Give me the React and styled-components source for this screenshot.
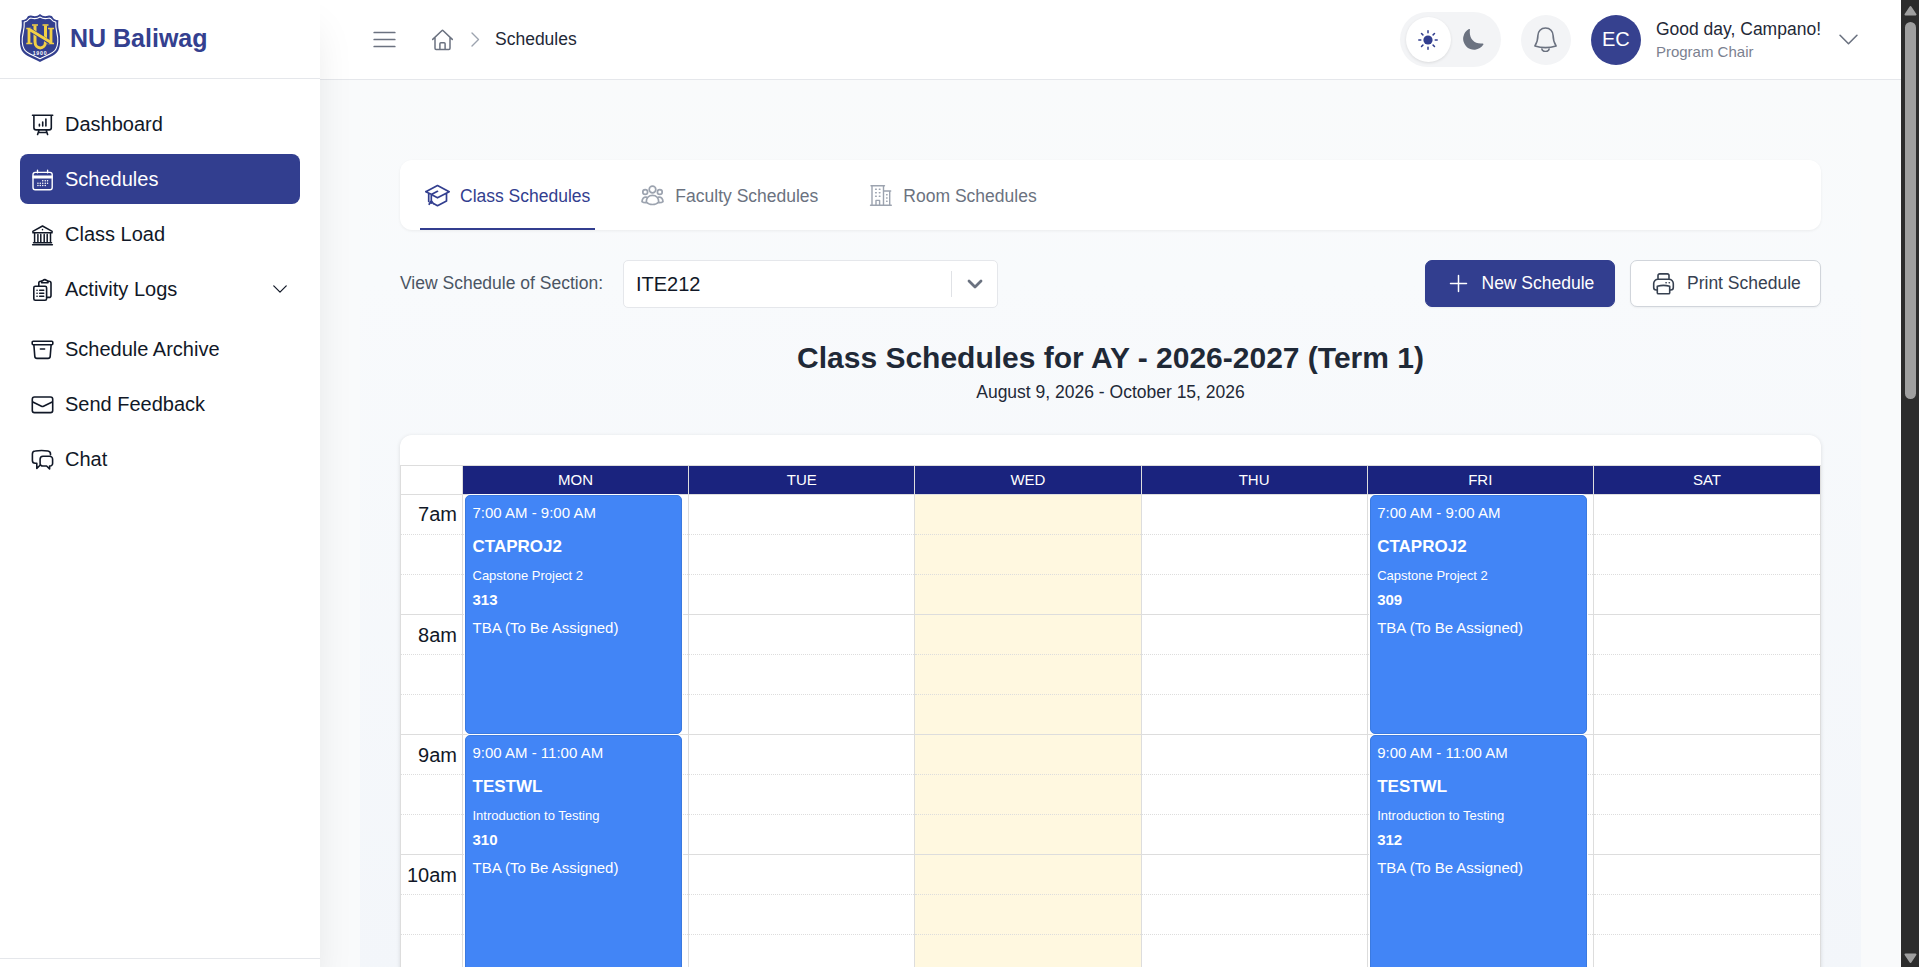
import React from "react";
import styled, { createGlobalStyle } from "styled-components";

const GlobalStyle = createGlobalStyle`
  *, *::before, *::after { box-sizing: border-box; }
  html, body, #root { height: 100%; margin: 0; }
  body {
    overflow: hidden;
    background: #f9fafb;
    color: #111827;
    font-family: "Liberation Sans", Arial, sans-serif;
  }
  button { font: inherit; border: 0; background: none; padding: 0; margin: 0; color: inherit; text-align: left; }
  h1, p { margin: 0; }
`;

/* ---------- icons ---------- */

const Svg = styled.svg`
  display: block;
  flex: none;
  width: ${(p) => p.$width || p.$size || 25}px;
  height: ${(p) => p.$size || 25}px;
  fill: none;
  stroke: currentColor;
  stroke-width: ${(p) => p.$stroke || 1.6};
  stroke-linecap: round;
  stroke-linejoin: round;
  color: ${(p) => p.$color || "inherit"};
`;

const Icon = ({ children, ...rest }) => (
  <Svg viewBox="0 0 25 25" {...rest}>{children}</Svg>
);

const DashboardIcon = () => (
  <Icon>
    <path d="M2.5 3.2h20.2M3.9 3.5v12.2a2.2 2.2 0 0 0 2.2 2.2h13a2.2 2.2 0 0 0 2.2-2.2V3.5M9 18.2 7.6 22.4M16.2 18.2l1.4 4.2M8.3 20.5h8.6M9.4 12.2v1.8M12.7 10v4M15.9 7v7" />
  </Icon>
);
const ScheduleIcon = () => (
  <Icon $stroke={1.4}>
    <rect x="3" y="5.4" width="19.2" height="17.3" rx="2.2" />
    <path d="M3 9.2h19.2M3 10.7h19.2M7.5 3.2v2.6M17.6 3.2v2.6" />
    <path d="M7.9 16.2h.1M7.9 18.5h.1M10.2 16.2h.1M10.2 18.5h.1M12.7 13.8h.1M12.7 16.2h.1M12.7 18.5h.1M15.2 13.8h.1M15.2 16.2h.1M17.5 13.8h.1M15.2 18.5h.1M17.5 16.2h.1" />
  </Icon>
);
const LibraryIcon = () => (
  <Icon $stroke={1.5}>
    <path d="M2.8 9.3 12.5 4l9.7 5.3M2.8 10.8h19.4M12.5 7.6v.2M4.6 11.5v9M7.9 12.5v8M10.8 12.5v8M14.2 12.5v8M17.2 12.5v8M20.5 11.5v9M3.5 20.7h18M2.6 22.8h19.8" />
  </Icon>
);
const LogsIcon = () => (
  <Icon $stroke={1.6}>
    <path d="M8.8 9V6a1.8 1.8 0 0 1 1.8-1.8h1M18 4.2h1a2 2 0 0 1 2 2v12.2a2 2 0 0 1-2 2h-2" />
    <path d="M11.6 4.8c0-1.1.8-1.3 1.5-1.4.8-1 2.6-1 3.4 0 .7.1 1.5.3 1.5 1.4v.9h-6.4z" />
    <rect x="3.8" y="9.3" width="12.8" height="14" rx="1.5" />
    <path d="M7 13.2h.1M9.7 13.2h4M7 16.2h.1M9.7 16.2h4M7 19.2h.1M9.7 19.2h4" />
  </Icon>
);
const ArchiveIcon = () => (
  <Icon>
    <path d="M3.2 4.2h18.6a1 1 0 0 1 1 1v1.6a1 1 0 0 1-1 1H3.2a1 1 0 0 1-1-1V5.2a1 1 0 0 1 1-1zM3.9 8.2l.9 11.2a2.2 2.2 0 0 0 2.2 2h11a2.2 2.2 0 0 0 2.2-2l.9-11.2M10.4 12h4.2" />
  </Icon>
);
const MailIcon = () => (
  <Icon>
    <rect x="2.3" y="5" width="20.4" height="15.6" rx="2.2" />
    <path d="m2.8 10 8.7 4.3a2.3 2.3 0 0 0 2 0L22.2 10" />
  </Icon>
);
const ChatIcon = () => (
  <Icon>
    <path d="M20.5 7.8V7a3 3 0 0 0-2.6-3 45 45 0 0 0-12.6 0 3 3 0 0 0-2.9 3v6.5a2.8 2.8 0 0 0 2.8 2.8h1.6v5.2l3.2-3.3" />
    <path d="M13 9.2h6.5a3 3 0 0 1 3.1 3v4.2a2.6 2.6 0 0 1-2.6 2.6h-.4v3l-3-3H13a2.6 2.6 0 0 1-2.9-2.6v-4.2a3 3 0 0 1 2.9-3z" />
  </Icon>
);
const ChevronDown = ({ size = 18, stroke = 1.5, color }) => (
  <Svg viewBox="0 0 18 18" $size={size} $stroke={stroke} $color={color}><path d="m1 5 8 8 8-8" /></Svg>
);
const HomeIcon = () => (
  <Icon $stroke={1.5}>
    <path d="m2.7 12.4 9.1-8.7a1 1 0 0 1 1.4 0l9.1 8.7M5 10.7v10.6c0 .7.4 1.1 1.1 1.1h12.8c.7 0 1.1-.4 1.1-1.1V10.7M9.9 22.2v-5.4c0-.6.4-1 1-1h3.2c.6 0 1 .4 1 1v5.4" />
  </Icon>
);
const CapIcon = () => (
  <Icon $stroke={1.7}>
    <path d="M.8 8.7 12.5 2.5l11.7 6.2-11.7 6.1-4.3-2.2M.8 8.7l6.5 3M12.5 8.3 6.3 11.6v8.5M3.7 10.3v8.2M8.5 20.6l4 2.1 9-4.7v-7.4M6.3 17.8 4.2 21.3M6.3 17.8l2.2 3" />
  </Icon>
);
const PeopleIcon = () => (
  <Icon $stroke={1.7}>
    <circle cx="12.5" cy="6.5" r="3.3" />
    <circle cx="5.2" cy="9" r="2.4" />
    <circle cx="19.8" cy="9" r="2.4" />
    <path d="M12.5 12.4c3.6 0 6.2 2.6 6.2 6.6-1.6 1.9-3.6 2.5-6.2 2.5s-4.6-.6-6.2-2.5c0-4 2.6-6.6 6.2-6.6zM6.4 14.2C3.7 13.9 2.2 15.5 2 18.6c1 .9 2.3 1.2 4.2 1.1M18.6 14.2c2.7-.3 4.2 1.3 4.4 4.4-1 .9-2.3 1.2-4.2 1.1" />
  </Icon>
);
const BuildingIcon = () => (
  <Icon $stroke={1.4}>
    <path d="M2.5 22.3h20.8M4 22V2.7h11.5V22M3 2.7h13.5M15.8 8h5.9v14M15.8 8h6.9M8 22v-4.6h3.6V22" />
    <path d="M7.6 6.2h.7M11.3 6.2h.7M7.6 9.7h.7M11.3 9.7h.7M7.6 13.2h.7M11.3 13.2h.7M18.6 11.7h.5M18.6 15h.5M18.6 18.3h.5" />
  </Icon>
);
const PrinterIcon = () => (
  <Icon $stroke={1.6}>
    <path d="M7 7.8V4.6a1.7 1.7 0 0 1 1.7-1.7h7.6A1.7 1.7 0 0 1 18 4.6v3.2M6 19H5.2a2.5 2.5 0 0 1-2.5-2.5v-4a4.3 4.3 0 0 1 4.3-4.3h11a4.3 4.3 0 0 1 4.3 4.3v4a2.5 2.5 0 0 1-2.5 2.5H19" />
    <path d="M6.3 15.2c4-1 8.400-1 12.400 0v6.500c0 .7-.4 1.100-1.100 1.100H7.400c-.7 0-1.100-.4-1.100-1.100zM15 11.800h.2M18.200 11.800h.2" />
  </Icon>
);
const BellIcon = () => (
  <Icon $color="#6b7280" $stroke={1.6}>
    <path d="M12.5 1c-4.6 0-7.6 3.3-7.6 7.6 0 5-1 7.3-3 10.300 6.800 2.200 14.400 2.200 21.200 0-2-3-3-5.300-3-10.300C20.100 4.300 17.100 1 12.500 1zM8.600 20.500c.2 2.600 1.700 4 3.900 4s3.700-1.400 3.900-4" />
  </Icon>
);

const Logo = () => (
  <Svg viewBox="0 0 40 48" $width={40} $size={48}>
    <g stroke="none">
      <path fill="#34408f" d="M20 0c2.500 2.300 5 2.600 8 1.800 2.600-.6 4.200.2 5 2 .8 1.400 2.600 2.200 5.400 2.400-.4 3.800-.3 7 .8 11.500 1.700 7 1.100 14.800-1.100 19C35.300 42 26 44.200 20 48 14 44.200 4.700 42 1.900 36.700-.3 32.500-.9 24.700.8 17.700 1.900 13.200 2 10 1.600 6.200 4.400 6 6.200 5.200 7 3.800c.8-1.800 2.400-2.600 5-2C15 2.600 17.500 2.300 20 0z" />
    </g>
    <path stroke="#fff" strokeWidth="1.1" d="M20 3c2.600 1.700 5.400 2 8.400 1.200 1.500-.3 2.500.3 3.100 1.300.8 1.300 2.200 2.200 4.300 2.600-.2 3.500 0 6.500 1 10.400 1.500 6.200 1 13-1 16.800-2.300 4.400-10.200 6.100-15.800 9.500C14.400 41.400 6.500 39.700 4.200 35.300c-2-3.800-2.500-10.600-1-16.800 1-3.900 1.200-6.900 1-10.400 2.100-.4 3.500-1.300 4.300-2.600.6-1 1.600-1.600 3.100-1.300C14.600 5 17.400 4.700 20 3z" />
    <g stroke="#f2cf45" strokeLinecap="butt">
      <path strokeWidth="3" d="M15 11.500v16c0 8.500 10.500 8.500 10.500 0v-16" />
      <path strokeWidth="1.7" d="M12 11h6M22.500 11h6M6.300 14.500h5M6.300 29.500h6M27.500 29.500H34M28 14.500h6" />
      <path stroke="#34408f" strokeWidth="4" d="M9.500 15.500 30 28.500" />
      <path strokeWidth="2.8" d="M9 15v14M31 15v14M9.500 15.500 31 28.500" />
    </g>
    <text x="20" y="40.5" textAnchor="middle" fontSize="5.2" fontWeight="700" letterSpacing=".8" fill="#fff" stroke="none">1900</text>
  </Svg>
);

/* ---------- page frame ---------- */

const Page = styled.div`
  display: grid;
  grid-template-columns: 320px minmax(0, 1fr) 18px;
  height: 967px;
  overflow: hidden;
`;

const Sidebar = styled.aside`
  position: relative;
  z-index: 2;
  display: flex;
  flex-direction: column;
  background: #fff;
  box-shadow: 0 25px 38px -6px rgba(0, 0, 0, 0.1);
`;
const Brand = styled.div`
  display: flex;
  align-items: center;
  gap: 10px;
  height: 79px;
  padding: 0 20px 2px;
  border-bottom: 1px solid #e5e7eb;
  color: #34408f;
  font-size: 25px;
  font-weight: 700;
`;
const Nav = styled.nav`
  flex: 1;
  display: flex;
  flex-direction: column;
  gap: 5px;
  padding: 20px;
`;
const NavItem = styled.button`
  display: flex;
  align-items: center;
  gap: 10px;
  height: 50px;
  padding: 0 ${(p) => (p.$expandable ? 13 : 10)}px 0 10px;
  border-radius: 8px;
  font-size: 20px;
  color: ${(p) => (p.$active ? "#fff" : "#111827")};
  background: ${(p) => (p.$active ? "#323e8f" : "transparent")};
  margin-bottom: ${(p) => (p.$expandable ? 5 : 0)}px;
  span { flex: 1; }
`;
const SidebarFooter = styled.div`
  height: 9px;
  border-top: 1px solid #e5e7eb;
`;

const Main = styled.main`
  display: flex;
  flex-direction: column;
  min-width: 0;
  overflow: hidden;
`;
const Header = styled.header`
  display: flex;
  flex: none;
  align-items: center;
  height: 80px;
  padding: 0 43px 0 52px;
  background: #fff;
  border-bottom: 1px solid #e5e7eb;
  color: #6b7280;
`;
const Crumbs = styled.div`
  display: flex;
  align-items: center;
  margin-left: 33px;
  gap: 13px;
`;
const CrumbText = styled.span`
  margin-left: -1px;
  padding-bottom: 1px;
  font-size: 17.5px;
  color: #1f2937;
`;
const HeaderTools = styled.div`
  display: flex;
  align-items: center;
  gap: 20px;
  margin-left: auto;
`;
const ThemeToggle = styled.div`
  display: flex;
  align-items: center;
  width: 101px;
  height: 55px;
  padding: 5px 5px 5px 6px;
  border-radius: 28px;
  background: #f3f4f6;
`;
const ToggleOption = styled.span`
  display: grid;
  place-items: center;
  width: 45px;
  height: 45px;
  border-radius: 50%;
  background: ${(p) => (p.$on ? "#fff" : "transparent")};
  box-shadow: ${(p) => (p.$on ? "0 1px 3px rgba(0,0,0,.1)" : "none")};
`;
const RoundButton = styled.button`
  display: grid;
  place-items: center;
  width: 50px;
  height: 50px;
  border-radius: 50%;
  background: #f3f4f6;
`;
const Profile = styled.div`
  display: flex;
  align-items: center;
`;
const Avatar = styled.div`
  display: grid;
  place-items: center;
  width: 50px;
  height: 50px;
  margin-right: 15px;
  border-radius: 50%;
  background: #36418f;
  color: #fff;
  font-size: 20px;
`;
const Greeting = styled.div`
  margin-right: 18px;
  font-size: 17.5px;
  line-height: 24px;
  color: #1f2937;
  white-space: nowrap;
  small { display: block; font-size: 15px; line-height: 21px; color: #7b8190; }
`;

/* ---------- content ---------- */

const Content = styled.div`
  flex: 1;
  margin: 0 40px;
  padding: 80px 40px 0;
  background: linear-gradient(180deg, #f9fafb 0, #f8fafc 200px, #f3f6fa 100%);
`;
const Tabs = styled.div`
  display: flex;
  gap: 40px;
  height: 70px;
  padding: 0 20px;
  border-radius: 12px;
  background: #fff;
  box-shadow: 0 1px 3px rgba(0, 0, 0, 0.06);
`;
const Tab = styled.button`
  display: flex;
  align-items: center;
  gap: 10px;
  padding: 3px 5px 0;
  border-bottom: 2px solid ${(p) => (p.$active ? "#323e8f" : "transparent")};
  color: ${(p) => (p.$active ? "#323e8f" : "#6b7280")};
  font-size: 17.5px;
  white-space: nowrap;
  svg { color: ${(p) => (p.$active ? "#323e8f" : "#9ca3af")}; }
  span { padding-top: 1px; }
`;
const Toolbar = styled.div`
  display: flex;
  align-items: center;
  height: 48px;
  margin-top: 30px;
`;
const FieldLabel = styled.label`
  width: 223px;
  padding-bottom: 2px;
  font-size: 17.5px;
  color: #4b5563;
`;
const Select = styled.div`
  display: flex;
  align-items: center;
  width: 375px;
  height: 48px;
  border: 1px solid #e5e7eb;
  border-radius: 5px;
  background: #fff;
  font-size: 20px;
  span { flex: 1; padding-left: 12px; }
`;
const SelectArrow = styled.div`
  display: grid;
  place-items: center;
  width: 46px;
  height: 26px;
  border-left: 1px solid #e0e2e6;
`;
const Actions = styled.div`
  display: flex;
  align-self: flex-start;
  gap: 15px;
  margin-left: auto;
`;
const ActionButton = styled.button`
  display: flex;
  align-items: center;
  gap: ${(p) => (p.$primary ? 10.5 : 11)}px;
  width: ${(p) => (p.$primary ? 190 : 191)}px;
  height: 47px;
  padding-left: 20px;
  border: 1px solid ${(p) => (p.$primary ? "#323e8f" : "#d1d5db")};
  border-radius: 7px;
  background: ${(p) => (p.$primary ? "#323e8f" : "#fff")};
  color: ${(p) => (p.$primary ? "#fff" : "#374151")};
  font-size: 17.5px;
  white-space: nowrap;
  box-shadow: 0 1px 2px rgba(0, 0, 0, 0.05);
  span { padding-bottom: 1px; }
`;
const Heading = styled.div`
  padding-top: 30px;
  text-align: center;
  color: #1f2937;
  h1 { font-size: 30px; line-height: 40px; }
  p { font-size: 17.5px; line-height: 28px; }
`;

/* ---------- calendar ---------- */

const line = "#dddddd";

const Calendar = styled.section`
  margin-top: 29px;
  padding-top: 30px;
  border-radius: 12px 12px 0 0;
  background: #fff;
  box-shadow: 0 1px 4px rgba(0, 0, 0, 0.12);
`;
const Grid = styled.div`
  display: grid;
  grid-template-columns: 62px repeat(6, minmax(0, 1fr));
  border: 1px solid ${line};
  border-bottom: 0;
`;
const DayHead = styled.div`
  height: 29px;
  border-right: 1px solid ${line};
  border-bottom: 1px solid ${line};
  background: ${(p) => (p.$blank ? "#fff" : "#1a237e")};
  color: #fff;
  font-size: 15px;
  line-height: 27px;
  text-align: center;
  &:nth-child(7) { border-right: 0; }
`;
const Column = styled.div`
  position: relative;
  border-right: 1px solid ${line};
  background: ${(p) => (p.$today ? "#fff8e0" : "#fff")};
  &:last-child { border-right: 0; }
`;
const Slot = styled.div`
  height: 40px;
  padding: 9px 5px 0 0;
  border-bottom: 1px ${(p) => (p.$hourEnd ? "solid" : "dotted")} ${line};
  font-size: 20px;
  line-height: 23px;
  text-align: right;
  &:first-child { padding-top: 8px; }
`;
const Event = styled.article`
  position: absolute;
  left: 2px;
  right: 2.7%;
  top: ${(p) => p.$start * 120}px;
  height: 239px;
  padding: 6px 6.5px;
  border: 1px solid #3b7ae0;
  border-radius: 5px;
  background: #4285f6;
  box-shadow: 0 0 0 1px #fff;
  color: #fff;
  white-space: nowrap;
`;
const EventLine = styled.div`
  font-size: ${(p) => p.$size}px;
  line-height: ${(p) => p.$height}px;
  font-weight: ${(p) => (p.$bold ? 700 : 400)};
`;

/* ---------- window scrollbar ---------- */

const Scrollbar = styled.div`
  display: flex;
  flex-direction: column;
  align-items: center;
  padding: 5px 0 3px 1px;
  background: #2c2c2c;
`;
const Arrow = styled.svg`
  width: 13px;
  height: 11px;
  fill: #9f9f9f;
  stroke: #9f9f9f;
  stroke-width: 2;
  stroke-linejoin: round;
  margin-top: ${(p) => (p.$down ? "auto" : 0)};
`;
const Thumb = styled.div`
  width: 11px;
  height: 377px;
  margin-top: 6px;
  border-radius: 6px;
  background: #9f9f9f;
`;

const navItems = [
  { label: "Dashboard", icon: DashboardIcon },
  { label: "Schedules", icon: ScheduleIcon, active: true },
  { label: "Class Load", icon: LibraryIcon },
  { label: "Activity Logs", icon: LogsIcon, expandable: true },
  { label: "Schedule Archive", icon: ArchiveIcon },
  { label: "Send Feedback", icon: MailIcon },
  { label: "Chat", icon: ChatIcon },
];

const tabs = [
  { label: "Class Schedules", icon: CapIcon, active: true },
  { label: "Faculty Schedules", icon: PeopleIcon },
  { label: "Room Schedules", icon: BuildingIcon },
];

const classesFor = (first, second) => [
  { start: 0, time: "7:00 AM - 9:00 AM", code: "CTAPROJ2", title: "Capstone Project 2", room: first },
  { start: 2, time: "9:00 AM - 11:00 AM", code: "TESTWL", title: "Introduction to Testing", room: second },
];
const days = [
  { name: "MON", events: classesFor("313", "310") },
  { name: "TUE", events: [] },
  { name: "WED", events: [], today: true },
  { name: "THU", events: [] },
  { name: "FRI", events: classesFor("309", "312") },
  { name: "SAT", events: [] },
];
const hours = ["7am", "8am", "9am", "10am"];
const slots = hours.flatMap((h) => [h, "", ""]);

const Slots = ({ labels }) =>
  slots.map((text, i) => (
    <Slot key={i} $hourEnd={i % 3 === 2}>{labels ? text : null}</Slot>
  ));

export default function App() {
  return (
    <>
      <GlobalStyle />
      <Page>
        <Sidebar>
          <Brand><Logo />NU Baliwag</Brand>
          <Nav>
            {navItems.map(({ label, icon: NavIcon, active, expandable }) => (
              <NavItem key={label} $active={active} $expandable={expandable}>
                <NavIcon />
                <span>{label}</span>
                {expandable && <ChevronDown size={14} stroke={1.6} />}
              </NavItem>
            ))}
          </Nav>
          <SidebarFooter />
        </Sidebar>

        <Main>
          <Header>
            <Icon $stroke={1.7}><path d="M2.2 5.5h20.6M2.2 12.5h20.6M2.2 19.5h20.6" /></Icon>
            <Crumbs>
              <HomeIcon />
              <Svg viewBox="0 0 15 15" $size={15} $stroke={1.4} $color="#9ca3af"><path d="m4 1 6.5 6.5L4 14" /></Svg>
              <CrumbText>Schedules</CrumbText>
            </Crumbs>
            <HeaderTools>
              <ThemeToggle>
                <ToggleOption $on>
                  <Svg viewBox="0 0 20 20" $size={20} $stroke={1.5} $color="#323e8f">
                    <circle cx="10" cy="10" r="4.6" fill="currentColor" stroke="none" />
                    <path d="M10 .8v2M10 17.2v2M.8 10h2M17.2 10h2M3.5 3.5l1.4 1.4M15.1 15.1l1.4 1.4M3.5 16.5l1.4-1.4M15.1 4.9l1.4-1.4" />
                  </Svg>
                </ToggleOption>
                <ToggleOption>
                  <Svg viewBox="0 0 24 24" $size={24}>
                    <path fill="#6b7280" stroke="none" d="M9 1.6C7.6 10 12.8 16.3 21.5 15.4c.8-.1 1.2.5.9 1.2A11 11 0 1 1 7.9 1c.7-.3 1.2 0 1.1.6z" />
                  </Svg>
                </ToggleOption>
              </ThemeToggle>
              <RoundButton><BellIcon /></RoundButton>
              <Profile>
                <Avatar>EC</Avatar>
                <Greeting>Good day, Campano!<small>Program Chair</small></Greeting>
                <ChevronDown size={19} color="#6b7280" />
              </Profile>
            </HeaderTools>
          </Header>

          <Content>
            <Tabs>
              {tabs.map(({ label, icon: TabIcon, active }) => (
                <Tab key={label} $active={active}><TabIcon /><span>{label}</span></Tab>
              ))}
            </Tabs>
            <Toolbar>
              <FieldLabel>View Schedule of Section:</FieldLabel>
              <Select>
                <span>ITE212</span>
                <SelectArrow>
                  <Svg viewBox="0 0 16 16" $size={16} $stroke={2.8} $color="#6b7280"><path d="m2 5 6 6 6-6" /></Svg>
                </SelectArrow>
              </Select>
              <Actions>
                <ActionButton $primary>
                  <Icon $stroke={1.5}><path d="M12.5 4.5v16M4.5 12.5h16" /></Icon>
                  <span>New Schedule</span>
                </ActionButton>
                <ActionButton><PrinterIcon /><span>Print Schedule</span></ActionButton>
              </Actions>
            </Toolbar>
            <Heading>
              <h1>Class Schedules for AY - 2026-2027 (Term 1)</h1>
              <p>August 9, 2026 - October 15, 2026</p>
            </Heading>
            <Calendar>
              <Grid>
                <DayHead $blank />
                {days.map((d) => <DayHead key={d.name}>{d.name}</DayHead>)}
                <Column><Slots labels /></Column>
                {days.map((d) => (
                  <Column key={d.name} $today={d.today}>
                    <Slots />
                    {d.events.map((e) => (
                      <Event key={e.code} $start={e.start}>
                        <EventLine $size={15} $height={22}>{e.time}</EventLine>
                        <EventLine $size={17} $height={45} $bold>{e.code}</EventLine>
                        <EventLine $size={13} $height={13}>{e.title}</EventLine>
                        <EventLine $size={15} $height={36} $bold>{e.room}</EventLine>
                        <EventLine $size={15} $height={20}>TBA (To Be Assigned)</EventLine>
                      </Event>
                    ))}
                  </Column>
                ))}
              </Grid>
            </Calendar>
          </Content>
        </Main>

        <Scrollbar>
          <Arrow viewBox="0 0 13 11"><path d="M6.5 2 11.5 9.5h-10z" /></Arrow>
          <Thumb />
          <Arrow $down viewBox="0 0 13 11"><path d="M6.5 9 11.5 1.5h-10z" /></Arrow>
        </Scrollbar>
      </Page>
    </>
  );
}
